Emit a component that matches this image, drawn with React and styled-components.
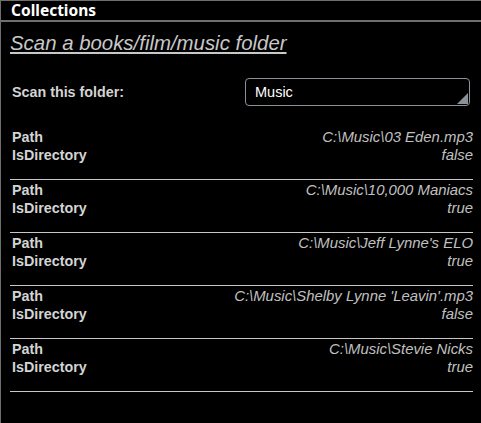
import React from 'react';
import styled, { createGlobalStyle } from 'styled-components';

const GlobalStyle = createGlobalStyle`
  html, body {
    margin: 0;
    padding: 0;
    background: #000;
  }
  body {
    font-family: "Liberation Sans", Arial, sans-serif;
  }
`;

const Panel = styled.div`
  box-sizing: border-box;
  width: 481px;
  height: 423px;
  background: #000;
  border-top: 1px solid #6e6e6e;
  border-left: 1px solid #6e6e6e;
  overflow: hidden;
`;

const Header = styled.div`
  height: 19px;
  line-height: 19px;
  padding-left: 10px;
  border-bottom: 2px solid #6e6e6e;
  color: #fff;
  font-family: "Noto Sans", "Open Sans", sans-serif;
  font-weight: 700;
  font-size: 15.5px;
`;

const Body = styled.div`
  padding: 0 8px 0 9px;
`;

const Title = styled.a`
  display: inline-block;
  margin-top: 9px;
  line-height: 24px;
  font-size: 20.4px;
  font-style: italic;
  color: #c8c8c8;
  text-decoration: underline;
  text-underline-offset: 2px;
`;

const FolderRow = styled.div`
  display: flex;
  align-items: center;
  justify-content: space-between;
  margin-top: 23px;
  padding-left: 2px;
`;

const Label = styled.div`
  color: #d4d4d4;
  font-size: 14.3px;
  font-weight: 700;
  line-height: 18px;
`;

const Select = styled.div`
  position: relative;
  box-sizing: border-box;
  width: 225px;
  height: 28px;
  margin-right: 3px;
  padding-left: 9px;
  border: 1px solid #8a9199;
  border-radius: 4px;
  color: #fff;
  font-size: 14.5px;
  line-height: 26px;
`;

const Corner = styled.svg`
  position: absolute;
  right: 1px;
  bottom: 1px;
`;

const List = styled.div`
  margin-top: 21px;
`;

const Item = styled.div`
  display: grid;
  grid-template-columns: auto 1fr;
  padding: 1px 0 15px 2px;
  border-bottom: 1px solid #c8c8c8;
`;

const Value = styled.div`
  text-align: right;
  color: #c0c0c0;
  font-size: 14.9px;
  font-style: italic;
  line-height: 18px;
  white-space: nowrap;
`;

const files = [
  { path: 'C:\\Music\\03 Eden.mp3', dir: 'false' },
  { path: 'C:\\Music\\10,000 Maniacs', dir: 'true' },
  { path: "C:\\Music\\Jeff Lynne's ELO", dir: 'true' },
  { path: "C:\\Music\\Shelby Lynne 'Leavin'.mp3", dir: 'false' },
  { path: 'C:\\Music\\Stevie Nicks', dir: 'true' },
];

const App = () => (
  <>
    <GlobalStyle />
    <Panel>
      <Header>Collections</Header>
      <Body>
        <Title>Scan a books/film/music folder</Title>
        <FolderRow>
          <Label>Scan this folder:</Label>
          <Select>
            Music
            <Corner width="11" height="11" viewBox="0 0 11 11">
              <polygon points="11,0 11,11 0,11" fill="#8a9199" />
            </Corner>
          </Select>
        </FolderRow>
        <List>
          {files.map((f) => (
            <Item key={f.path}>
              <Label>Path</Label>
              <Value>{f.path}</Value>
              <Label>IsDirectory</Label>
              <Value>{f.dir}</Value>
            </Item>
          ))}
        </List>
      </Body>
    </Panel>
  </>
);

export default App;
